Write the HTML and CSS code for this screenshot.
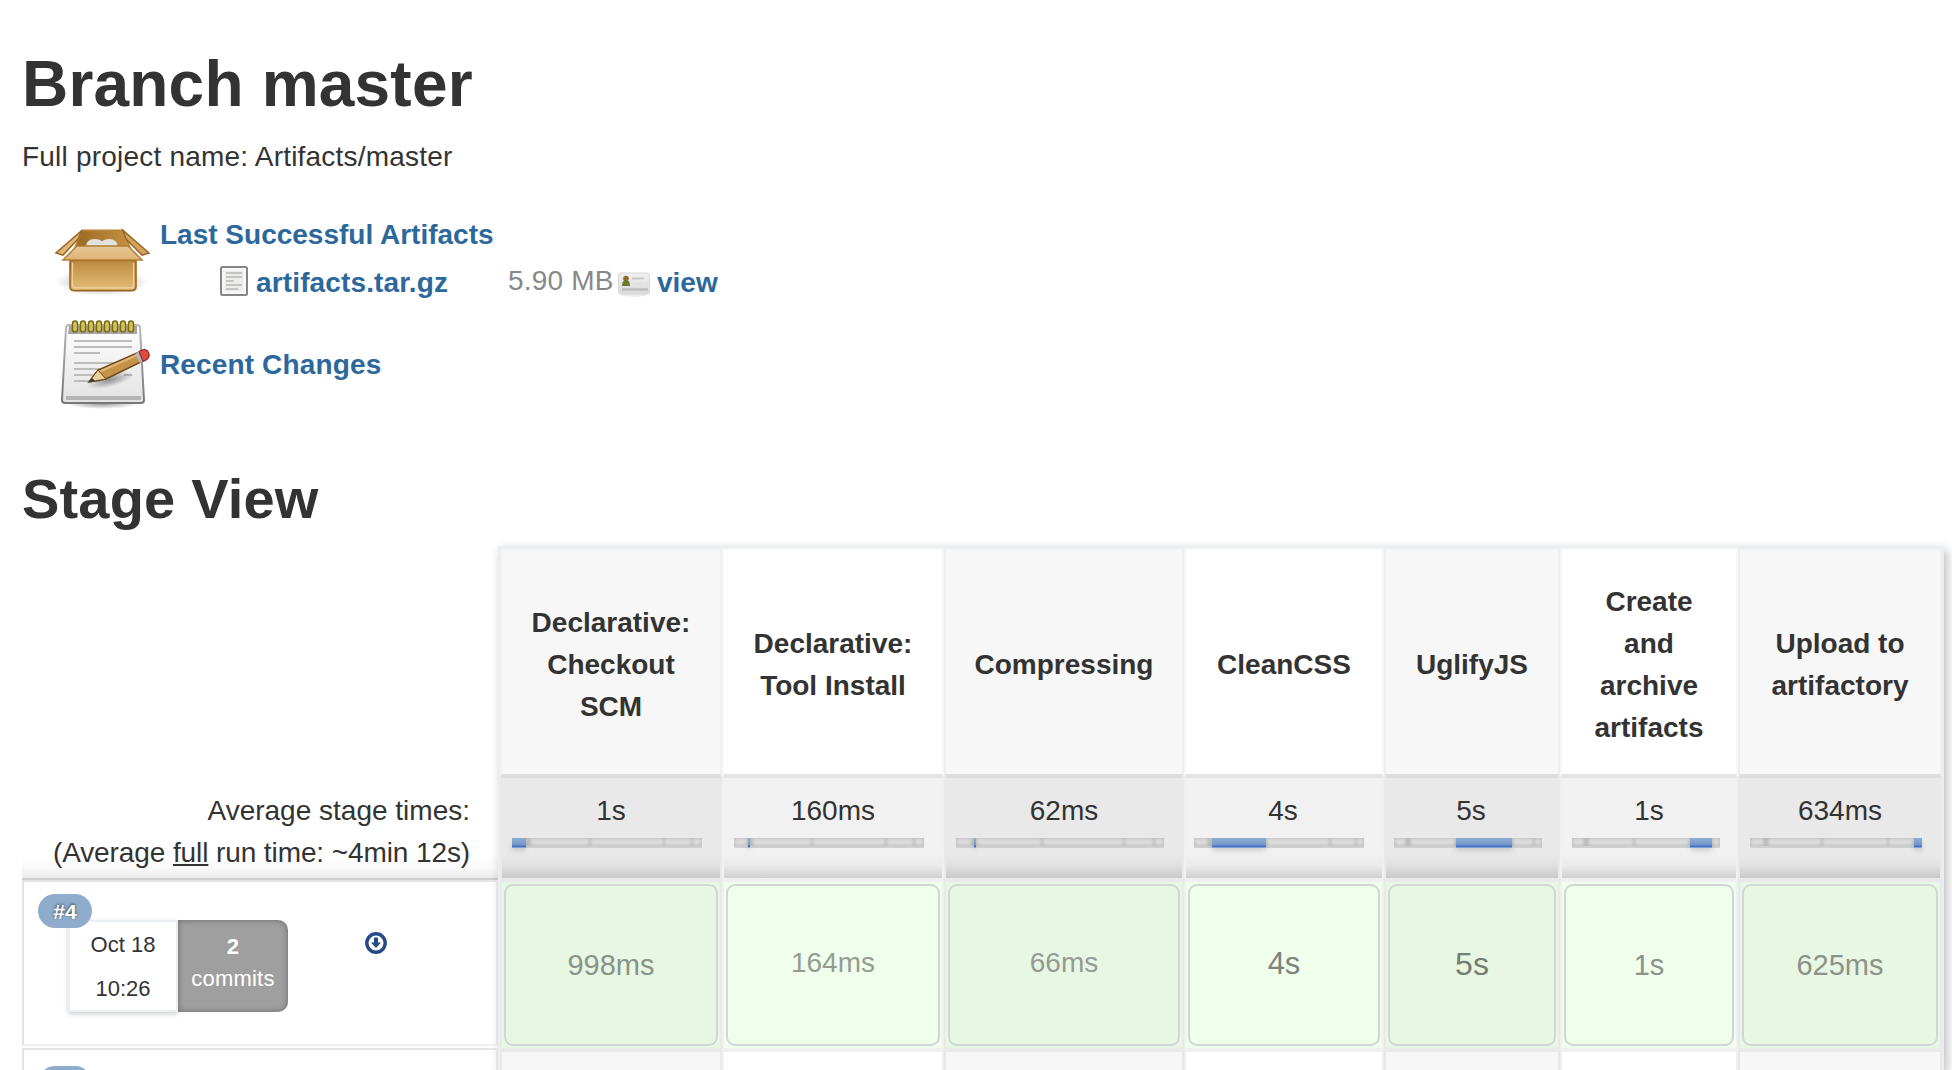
FILE: index.html
```html
<!DOCTYPE html>
<html lang="en">
<head>
<meta charset="utf-8">
<title>Branch master</title>
<link rel="stylesheet" href="styles.css">
</head>
<body>
<main class="page">
  <h1 class="title">Branch master</h1>
  <p class="project">Full project name: Artifacts/master</p>

  <section class="summary">
    <svg class="icon-box" viewBox="0 0 96 68" width="96" height="73" preserveAspectRatio="none">
      <defs>
        <linearGradient id="bf" x1="0" y1="0" x2="0" y2="1"><stop offset="0" stop-color="#bd8a3d"/><stop offset="1" stop-color="#e5bd7a"/></linearGradient>
        <linearGradient id="bl" x1="0" y1="0" x2="0" y2="1"><stop offset="0" stop-color="#e8c796"/><stop offset="1" stop-color="#dfb375"/></linearGradient>
        <linearGradient id="bi" x1="0" y1="0" x2="1" y2="0"><stop offset="0" stop-color="#9a6a22"/><stop offset="1" stop-color="#c59143"/></linearGradient>
        <radialGradient id="sh"><stop offset="0" stop-color="#000" stop-opacity=".38"/><stop offset="1" stop-color="#000" stop-opacity="0"/></radialGradient>
      </defs>
      <ellipse cx="48" cy="54" rx="46" ry="13" fill="url(#sh)"/>
      <path d="M28 6H69L76 22V35H21V22Z" fill="url(#bi)" stroke="#b78337" stroke-width="1.600"/>
      <path d="M32 21q0-7 9-7q4 0 7 2q3-2 7-2q8 0 9 7z" fill="#e1e1df"/>
      <path d="M28 6L2 27L9 29L24 14Z" fill="#dfb67b" stroke="#9a6520" stroke-width="1.4"/>
      <path d="M69 6L95 27L88 29L72 14Z" fill="#d3a460" stroke="#9a6520" stroke-width="1.4"/>
      <path d="M16 34H82V58q0 4-4 4H20q-4 0-4-4Z" fill="url(#bf)" stroke="#9a6520" stroke-width="1.6"/>
      <path d="M18.500 36V57q0 2.500 2.500 2.500H77q2.500 0 2.500-2.500V36" fill="none" stroke="#efcf9a" stroke-width="1.3"/>
      <path d="M23 20.500H74L88 33.500H9Z" fill="url(#bl)" stroke="#b07d35" stroke-width="1.4"/>
    </svg>
    <div class="artifacts">
      <a class="link" href="#">Last Successful Artifacts</a>
      <div class="file-row">
        <svg class="icon-file" viewBox="0 0 28 30" width="28" height="30">
          <rect x="1" y="1" width="26" height="28" rx="1.500" fill="#f8f8f8" stroke="#858585" stroke-width="2"/>
          <rect x="4.500" y="4.500" width="19" height="21" fill="#ededeb"/>
          <path d="M6 7H22M6 11H22M6 15H14M6 19H22M6 23H18" stroke="#c3c3c3" stroke-width="1.800"/>
        </svg>
        <a class="link file-name" href="#">artifacts.tar.gz</a>
        <span class="size">5.90 MB</span>
        <svg class="icon-view" viewBox="0 0 32 26" width="32" height="26">
          <defs><linearGradient id="vc" x1="0" y1="0" x2="0" y2="1"><stop offset="0" stop-color="#f0f0f0"/><stop offset="1" stop-color="#dadada"/></linearGradient></defs>
          <ellipse cx="16" cy="22" rx="14" ry="3" fill="#000" opacity=".07"/>
          <rect x=".5" y="1" width="31" height="21" rx="2" fill="url(#vc)" stroke="#d8d8d8"/>
          <circle cx="8" cy="6.500" r="2.800" fill="#8e6a2c"/>
          <path d="M4 14q0-6 4-6t4 6z" fill="#6f7a2a"/>
          <path d="M14 6.500H26" stroke="#c9c9c9" stroke-width="2"/>
          <path d="M17 11.500H24" stroke="#dcdcdc" stroke-width="1.500"/>
          <path d="M4 17.500H30" stroke="#bcbcbc" stroke-width="2.400"/>
        </svg>
        <a class="link" href="#">view</a>
      </div>
    </div>
    <svg class="icon-note" viewBox="0 0 96 92" width="96" height="92">
      <defs>
        <linearGradient id="np" x1="0" y1="0" x2="0" y2="1"><stop offset="0" stop-color="#fff"/><stop offset="1" stop-color="#e2e2e2"/></linearGradient>
        <linearGradient id="nb" x1="0" y1="0" x2="0" y2="1"><stop offset="0" stop-color="#b9b9b9"/><stop offset="1" stop-color="#777"/></linearGradient>
      </defs>
      <ellipse cx="48" cy="85" rx="36" ry="5" fill="url(#sh)"/>
      <path d="M15 6H83q3 0 3 3L90 81q0 3-3 3H11q-3 0-3-3L12 9q0-3 3-3Z" fill="url(#np)" stroke="url(#nb)" stroke-width="2"/>
      <path d="M15 7H83V15H14Z" fill="#a5a5a3"/>
      <path d="M12 77H87V81H12Z" fill="#b5b5b5"/>
      <path d="M20 22H78M20 28H78M20 34H46M20 44H68M20 50H60M20 56H50M20 62H46M70 56H78" stroke="#bcbcbc" stroke-width="2"/>
      <g fill="#d8c452" stroke="#7a6c1c" stroke-width="1.500">
        <rect x="18.500" y="2" width="5" height="11" rx="2.500"/><rect x="26.500" y="2" width="5" height="11" rx="2.500"/><rect x="34.500" y="2" width="5" height="11" rx="2.500"/><rect x="42.500" y="2" width="5" height="11" rx="2.500"/><rect x="50.500" y="2" width="5" height="11" rx="2.500"/><rect x="58.500" y="2" width="5" height="11" rx="2.500"/><rect x="66.500" y="2" width="5" height="11" rx="2.500"/><rect x="74.500" y="2" width="5" height="11" rx="2.500"/>
      </g>
      <ellipse cx="56" cy="61" rx="24" ry="7" fill="url(#sh)" transform="rotate(-14 56 61)"/>
      <path d="M35 63L44 51L83 34L87 43L52 60Z" fill="#c6924a" stroke="#6d4716" stroke-width="1.500"/>
      <path d="M45 53L83 36" stroke="#e2b878" stroke-width="2"/>
      <path d="M35 63L44 51L52 60Z" fill="#e5d29c" stroke="#6d4716" stroke-width="1"/>
      <path d="M35 63L38 59L41 62Z" fill="#333"/>
      <path d="M81 35L85 33L90 42L86 44Z" fill="#b9b9bd"/>
      <path d="M85 32.500q5-3 8-1q3 3 2 6q-1 3-6 5Z" fill="#e04a42" stroke="#8d2f22" stroke-width="1.200"/>
    </svg>
    <a class="link changes" href="#">Recent Changes</a>
  </section>

  <h2 class="subtitle">Stage View</h2>

  <section class="stage-view">
    <div class="runs">
      <div class="averages">
        <div>Average stage times:</div>
        <div class="full-time">(Average <u>full</u> run time: ~4min 12s)</div>
      </div>
      <div class="run">
        <span class="badge">#4</span>
        <div class="run-info">
          <div class="run-date"><span>Oct 18</span><span>10:26</span></div>
          <div class="commits"><b>2</b><span>commits</span></div>
        </div>
        <svg class="icon-down" viewBox="0 0 22 22" width="22" height="22">
          <circle cx="11" cy="11" r="9.200" fill="none" stroke="#264a86" stroke-width="3.400"/>
          <path d="M9 5.500H13V10.500H16L11 16L6 10.500H9Z" fill="#264a86"/>
        </svg>
      </div>
      <div class="run run-next"><span class="badge"></span></div>
    </div>

    <div class="stages">
      <div class="stage odd">
        <div class="name">Declarative:<br>Checkout<br>SCM</div>
        <div class="avg"><span>1s</span><div class="bar"><i class="on" style="width:14px"></i><i style="width:2px"></i><i style="width:2px"></i><i style="width:60px"></i><i style="width:74px"></i><i style="width:28px"></i><i style="width:10px"></i></div></div>
        <div class="cell"><div class="card t2">998ms</div></div>
        <div class="next"></div>
      </div>
      <div class="stage">
        <div class="name">Declarative:<br>Tool Install</div>
        <div class="avg"><span>160ms</span><div class="bar"><i style="width:14px"></i><i class="on" style="width:2px"></i><i style="width:2px"></i><i style="width:60px"></i><i style="width:74px"></i><i style="width:28px"></i><i style="width:10px"></i></div></div>
        <div class="cell"><div class="card t1">164ms</div></div>
        <div class="next"></div>
      </div>
      <div class="stage odd">
        <div class="name">Compressing</div>
        <div class="avg"><span>62ms</span><div class="bar"><i style="width:16px"></i><i style="width:2px"></i><i class="on" style="width:2px"></i><i style="width:66px"></i><i style="width:82px"></i><i style="width:30px"></i><i style="width:10px"></i></div></div>
        <div class="cell"><div class="card t1">66ms</div></div>
        <div class="next"></div>
      </div>
      <div class="stage tight">
        <div class="name">CleanCSS</div>
        <div class="avg"><span>4s</span><div class="bar"><i style="width:14px"></i><i style="width:2px"></i><i style="width:2px"></i><i class="on" style="width:54px"></i><i style="width:64px"></i><i style="width:26px"></i><i style="width:8px"></i></div></div>
        <div class="cell"><div class="card t3">4s</div></div>
        <div class="next"></div>
      </div>
      <div class="stage odd tight">
        <div class="name">UglifyJS</div>
        <div class="avg"><span>5s</span><div class="bar"><i style="width:12px"></i><i style="width:2px"></i><i style="width:2px"></i><i style="width:46px"></i><i class="on" style="width:56px"></i><i style="width:22px"></i><i style="width:8px"></i></div></div>
        <div class="cell"><div class="card t4">5s</div></div>
        <div class="next"></div>
      </div>
      <div class="stage">
        <div class="name">Create<br>and<br>archive<br>artifacts</div>
        <div class="avg"><span>1s</span><div class="bar"><i style="width:12px"></i><i style="width:2px"></i><i style="width:2px"></i><i style="width:46px"></i><i style="width:56px"></i><i class="on" style="width:22px"></i><i style="width:8px"></i></div></div>
        <div class="cell"><div class="card t2">1s</div></div>
        <div class="next"></div>
      </div>
      <div class="stage odd">
        <div class="name">Upload to<br>artifactory</div>
        <div class="avg"><span>634ms</span><div class="bar"><i style="width:14px"></i><i style="width:2px"></i><i style="width:2px"></i><i style="width:54px"></i><i style="width:66px"></i><i style="width:26px"></i><i class="on" style="width:8px"></i></div></div>
        <div class="cell"><div class="card t2">625ms</div></div>
        <div class="next"></div>
      </div>
    </div>
  </section>
</main>
</body>
</html>
```
FILE: styles.css
```css
* { box-sizing: border-box; }
body {
  margin: 0;
  background: #fff;
  color: #333;
  font: 28px/42px "Liberation Sans", Arial, sans-serif;
}
.page { height: 1070px; overflow: hidden; padding: 47px 8px 0 22px; }
.title { margin: 0; font-size: 64px; line-height: 74px; font-weight: bold; letter-spacing: .2px; white-space: nowrap; }
.project { margin: 15px 0 0; letter-spacing: .21px; }

/* artifact and change links */
.summary {
  display: grid;
  grid-template-columns: 104px 1fr;
  grid-template-rows: 105px 92px;
  padding-left: 34px;
  margin-top: 36px;
  height: 197px;
}
.icon-box { margin: 10px 0 0 -2px; }
.icon-note { margin-left: -2px; }
.link { color: #2c689c; font-weight: bold; text-decoration: none; }
.artifacts { display: flex; flex-direction: column; }
.file-row { display: flex; align-items: flex-start; padding: 6px 0 0 60px; white-space: nowrap; }
.icon-file { margin: 4px 8px 0 0; flex: none; }
.icon-view { margin: 10px 7px 0 5px; flex: none; }
.file-name { width: 252px; letter-spacing: .14px; }
.size { width: 105px; margin-top: -2px; letter-spacing: .2px; color: #888; }
.changes { margin-top: 25px; letter-spacing: .14px; }
.subtitle { margin: 56px 0 0; font-size: 56px; line-height: 64px; letter-spacing: .18px; }

/* stage table */
.stage-view { display: flex; margin-top: 15px; height: 524px; }
.runs { width: 476px; padding-top: 232px; flex: none; }
.averages {
  height: 102px;
  padding: 12px 28px 0 0;
  text-align: right;
  white-space: nowrap;
  border-bottom: 2px solid #cecece;
  background: linear-gradient(#fff0 78px, #f9f9f9 90px, #ececec 100px);
}
.full-time { letter-spacing: -.1px; }
.run {
  position: relative;
  display: flex;
  height: 166px;
  padding: 38px 0 0 44px;
  border: 2px solid #e4e4e4;
  border-bottom-color: #eee;
}
.run-next { margin-top: 2px; height: 22px; padding: 0; border-bottom: 0; overflow: hidden; }
.badge {
  position: absolute;
  left: 14px;
  top: 12px;
  width: 54px;
  height: 34px;
  border-radius: 17px;
  background: #8faccc;
  color: #fff;
  font-size: 21px;
  line-height: 36px;
  font-weight: bold;
  text-align: center;
  text-shadow: 0 -1px 3px #345;
}
.run-next .badge { top: 16px; }
.run-info { display: flex; height: 92px; font-size: 22px; }
.run-date {
  display: flex;
  flex-direction: column;
  width: 110px;
  padding-top: 1px;
  line-height: 44px;
  text-align: center;
  border: 2px solid #e9eef2;
  box-shadow: 0 2px 5px #0003;
}
.commits {
  display: flex;
  flex-direction: column;
  width: 110px;
  padding-top: 11px;
  line-height: 32px;
  letter-spacing: .2px;
  text-align: center;
  color: #fff;
  background: #9f9f9f;
  border-radius: 0 10px 10px 0;
  box-shadow: inset 0 0 6px #0005;
}
.icon-down { margin: 12px 0 0 77px; }
.stages {
  display: grid;
  grid-template-columns: 222px 222px 240px 200px 176px 178px 204px;
  width: 1446px;
  flex: none;
  border: 2px solid #e9eef2;
  border-bottom: 0;
  box-shadow: 3px 4px 10px #0004;
}
.stage { display: grid; grid-template-columns: 100%; grid-template-rows: 230px 102px 170px 1fr; text-align: center; background: #fff; }
.name {
  display: flex;
  align-items: center;
  justify-content: center;
  padding-top: 6px;
  font-weight: bold;
  border: 2px solid #f7f7f7;
  border-bottom: 4px solid #e5e5e5;
}
.odd .name { background: #f7f7f7; border-color: #f0f0f0; border-bottom-color: #dedede; }
.avg {
  padding: 12px 16px 0 10px;
  border: solid #f0f0f0;
  border-width: 0 2px 2px;
  background: linear-gradient(#f1f1f1 76px, #ebebeb 87px, #d0d0d0 100px);
}
.tight .avg { padding-left: 8px; }
.avg span { display: block; margin-right: -6px; }
.odd .avg { background: linear-gradient(#e9e9e9 76px, #e2e2e2 87px, #c8c8c8 100px); border-color: #e9e9e9; }
.bar { display: flex; width: max-content; height: 10px; margin-top: 6px; background: #dedede; border-bottom: 2px solid #cfcfcf; }
.bar i { height: 8px; box-shadow: inset 0 0 4px #0003; }
.bar .on { position: relative; height: 10px; background: linear-gradient(#8eadd3, #7197ca 7px, #4a70c4 8px, #4a70c4 9px, #7ba2db 9px); box-shadow: 0 3px 5px #0002; }
.cell { padding: 2px; border: 2px solid #f0f0f0; background: #f0ffeb; }
.odd .cell { background: #e8f7e3; border-color: #e9e9e9; }
.card {
  display: flex;
  align-items: center;
  justify-content: center;
  height: 162px;
  border: 2px solid #d3d6d9;
  border-radius: 9px;
}
.t1 { font-size: 28px; color: #959b93; padding-bottom: 4px; }
.t2 { font-size: 29px; color: #8b928a; }
.t3 { font-size: 31px; color: #7e837c; padding-bottom: 2px; }
.t4 { font-size: 32px; color: #757c72; padding-bottom: 3px; }
.next { border: 2px solid #f0f0f0; border-bottom: 0; }
.odd .next { background: #f7f7f7; border-color: #e9e9e9; }
```
